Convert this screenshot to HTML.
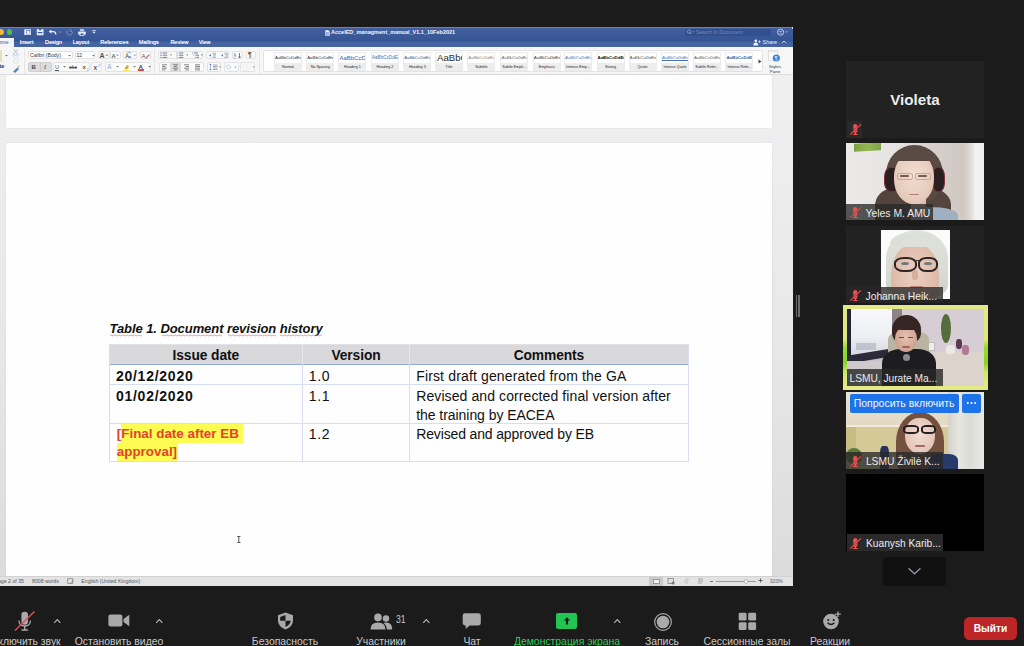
<!DOCTYPE html>
<html><head><meta charset="utf-8">
<style>
*{margin:0;padding:0;box-sizing:border-box}
html,body{width:1024px;height:646px;overflow:hidden;background:#1b1b1b;font-family:"Liberation Sans",sans-serif}
body{position:relative}
.a{position:absolute}
.w{color:#fff}
.tab{position:absolute;top:38.2px;font-size:5.5px;line-height:8px;color:#f4f6fb;text-shadow:0 0 .4px #fff}
.btn{position:absolute;background:#fbfbfb;border:1px solid #e2e2e2;border-radius:2px}
.ico{position:absolute;font-size:6px;line-height:8px;color:#555;text-align:center}
.card{position:absolute;top:52.4px;width:28px;height:18.2px;background:#fdfdfd;border:1px solid #ececec;border-radius:1px}
.card .pv{position:absolute;left:0;right:0;top:0;height:10px;font-size:4.4px;line-height:10px;text-align:center;color:#333;white-space:nowrap;overflow:hidden}
.card .lb{position:absolute;left:0;right:0;bottom:0;height:7px;background:#ededed;font-size:3.7px;line-height:8.6px;text-align:center;color:#222;white-space:nowrap;overflow:hidden}
.page{position:absolute;background:#fefefe;box-shadow:0 0 1px 0 #c4c4c4}
.cell{position:absolute;font-size:14px;line-height:18.2px;color:#111;white-space:nowrap}
.st{position:absolute;top:578px;font-size:5.2px;line-height:7px;color:#555;white-space:nowrap}
.tb{color:#c9c9c9;font-size:10.4px;line-height:14px;white-space:nowrap}
</style></head><body>

<!-- ================= WORD WINDOW ================= -->
<div class="a" style="left:0;top:27px;width:793px;height:559px;background:linear-gradient(180deg,#f1f1f2 0%,#efeff0 12%,#e9e9eb 50%,#dcdbdd 97%)"></div>
<!-- title + tabs -->
<div class="a" style="left:0;top:27px;width:793px;height:20px;background:linear-gradient(180deg,#4460a0 0%,#3c5a9a 35%,#365596 72%,#4663a2 73.5%,#4764a2 100%)"></div>
<div class="a" style="left:0;top:27px;width:793px;height:1px;background:#6a82b8"></div>
<div class="a" style="left:792px;top:27px;width:1px;height:2px;background:#ddd"></div>
<!-- traffic lights -->
<div class="a" style="left:-2px;top:29px;width:6px;height:6px;border-radius:50%;background:#f2b733"></div>
<div class="a" style="left:6.5px;top:29.3px;width:5.6px;height:5.6px;border-radius:50%;background:#50c03e"></div>
<!-- quick access icons -->
<svg class="a" style="left:23px;top:29px" width="76" height="8" viewBox="0 0 76 8">
  <g fill="#e9eef8">
    <path d="M1.3 0.2h6.7v5.9h-6.7z M3.4 1v4.3h3.8v-4.3z" fill-rule="evenodd"/><path d="M3.9 1.4h2l1 1v2.5h-3z" fill="#dfe6f4"/>
    <path d="M13.8 0.6 a.6 .6 0 0 1 .6 -.5h5.5l.6 .6v5a.5 .5 0 0 1 -.5 .5h-5.7a.5 .5 0 0 1 -.5 -.5z M14.8 2.9h4.6v1.3h-4.6z M15.8 .1h2.6v1.2h-2.6z" fill-rule="evenodd"/>
    <path d="M25.8 2.6 L28.3 0.5 L28.3 4.7z"/><path d="M28 2.6 H30.3 Q32.8 2.6 32.8 5.6" fill="none" stroke="#e9eef8" stroke-width="1.4"/>
    <circle cx="37" cy="3.1" r=".7" fill="#aebcdc"/>
    <path d="M56 2.4 h6 a.8 .8 0 0 1 .8 .8 v2.3 h-1.4 v1.3 h-4.8 v-1.3 h-1.4 v-2.3 a.8 .8 0 0 1 .8 -.8z M57 0.2 h4 v1.6 h-4z M57.5 4.4 h3 v1.6 h-3z" fill-rule="evenodd"/>
    <path d="M69.3 1.2 h3.5 v.8 h-3.5z M69.3 2.8 h3.5 l-1.75 1.6z"/>
  </g>
  <path d="M48.3 1.7 A2.6 2.6 0 1 1 45.2 1.4" fill="none" stroke="#7f95c5" stroke-width=".9"/><path d="M46.8 0.2 L48.6 1.4 L46.9 2.8" fill="none" stroke="#7f95c5" stroke-width=".8"/>
</svg>
<!-- doc title -->
<svg class="a" style="left:325px;top:29.5px" width="5" height="6" viewBox="0 0 5 6"><path d="M0.3 0.3h3l1.4 1.4v4h-4.4z" fill="#f2f4fa"/><path d="M1 2.5h2.8M1 3.6h2.8M1 4.7h2.8" stroke="#3e5ea5" stroke-width=".5"/></svg>
<div class="a" style="left:331px;top:28.5px;font-size:5.5px;line-height:7px;font-weight:bold;color:#f2f4fa;white-space:nowrap">AccelED_managment_manual_V1.1_10Feb2021</div>
<!-- search -->
<div class="a" style="left:685px;top:28.5px;width:86px;height:7px;background:#30508f;border-radius:1px"></div>
<svg class="a" style="left:686px;top:29px" width="9" height="6" viewBox="0 0 9 6"><circle cx="3" cy="2.6" r="1.7" fill="none" stroke="#9fb1d6" stroke-width=".7"/><path d="M4.2 3.8 L5.4 5" stroke="#9fb1d6" stroke-width=".8"/><path d="M6.3 2.5h2l-1 1.1z" fill="#9fb1d6"/></svg>
<div class="a" style="left:696px;top:29px;font-size:5.15px;line-height:6px;color:#7388b6;white-space:nowrap">Search in Document</div>
<svg class="a" style="left:776px;top:28px" width="13" height="9" viewBox="0 0 13 9"><circle cx="4.6" cy="4.2" r="3.1" fill="none" stroke="#d9e0ef" stroke-width=".8"/><path d="M3 3.5h3.2M3.3 5.2h2.6" stroke="#d9e0ef" stroke-width=".6"/><path d="M9.5 3.6h2l-1 1.2z" fill="#d9e0ef"/></svg>
<!-- tabs -->
<div class="a" style="left:0;top:38px;width:14px;height:9px;background:#f4f5f7"></div>
<div class="tab" style="left:-6px;color:#3a5da5;text-shadow:none">Home</div>
<div class="tab" style="left:19.7px">Insert</div>
<div class="tab" style="left:45px">Design</div>
<div class="tab" style="left:72.7px">Layout</div>
<div class="tab" style="left:100.3px">References</div>
<div class="tab" style="left:138.7px">Mailings</div>
<div class="tab" style="left:170.4px">Review</div>
<div class="tab" style="left:198.7px">View</div>
<svg class="a" style="left:753px;top:39px" width="8" height="7" viewBox="0 0 8 7"><circle cx="2.8" cy="1.8" r="1.4" fill="#eef1f8"/><path d="M0.3 6.5 Q0.5 3.6 2.8 3.6 Q5 3.6 5.3 6.5z" fill="#eef1f8"/><path d="M5.2 2.6h2.6M6.5 1.3v2.6" stroke="#eef1f8" stroke-width=".7"/></svg>
<div class="a" style="left:762.6px;top:39px;font-size:5.4px;line-height:7px;color:#eef1f8">Share</div>
<svg class="a" style="left:781px;top:40px" width="6" height="4" viewBox="0 0 6 4"><path d="M0.8 3.2 L3 1 L5.2 3.2" fill="none" stroke="#eef1f8" stroke-width=".8"/></svg>

<!-- ribbon -->
<div class="a" style="left:0;top:47px;width:793px;height:28px;background:#f6f6f7"></div>
<div class="a" style="left:0;top:74px;width:793px;height:1px;background:#dedede"></div>
<!-- paste / clipboard -->
<div class="a" style="left:-3px;top:50px;width:5px;height:12px;background:#e9dcc0;border-radius:1px"></div>
<div class="a" style="left:-0.5px;top:63.2px;font-size:5.5px;line-height:7px;color:#333;font-weight:bold">te</div>
<svg class="a" style="left:5px;top:55px" width="3" height="2" viewBox="0 0 3 2"><path d="M0 0h3l-1.5 1.6z" fill="#777"/></svg>
<svg class="a" style="left:11px;top:48px" width="10" height="26" viewBox="0 0 10 26">
  <path d="M2.5 1 L7 6 M7 1 L2.5 6" stroke="#9aa0a8" stroke-width=".6"/><circle cx="3" cy="7.3" r="1.1" fill="none" stroke="#9ab8dc" stroke-width=".5"/><circle cx="6.5" cy="7.3" r="1.1" fill="none" stroke="#9ab8dc" stroke-width=".5"/>
  <circle cx="5" cy="13" r="2.4" fill="none" stroke="#d4d4d4" stroke-width=".6"/>
  <path d="M2.2 23.5 L6.5 19.5 L8 21 L4 25z" fill="#4f7fc4"/><path d="M6 19 L8 17 L9 18 L7.5 20.5z" fill="#d8c9a8"/>
</svg>
<div class="a" style="left:24px;top:49px;width:1px;height:25px;background:#e6e6e6"></div>
<!-- font group -->
<div class="btn" style="left:28px;top:50.7px;width:44.5px;height:8.8px;background:#fff"></div>
<div class="a" style="left:30px;top:51.5px;font-size:5.1px;line-height:7px;color:#333;white-space:nowrap">Calibri (Body)</div>
<svg class="a" style="left:68px;top:54.5px" width="3" height="2" viewBox="0 0 3 2"><path d="M0 0h3l-1.5 1.6z" fill="#777"/></svg>
<div class="btn" style="left:74.7px;top:50.7px;width:20.8px;height:8.8px;background:#fff"></div>
<div class="a" style="left:76.5px;top:51.5px;font-size:5.1px;line-height:7px;color:#333">12</div>
<svg class="a" style="left:91.5px;top:54.5px" width="3" height="2" viewBox="0 0 3 2"><path d="M0 0h3l-1.5 1.6z" fill="#777"/></svg>
<div class="btn" style="left:98px;top:51px;width:12px;height:8px"></div>
<div class="btn" style="left:110px;top:51px;width:10.5px;height:8px"></div>
<svg class="a" style="left:98px;top:51px" width="12" height="8" viewBox="0 0 12 8"><text x="1.6" y="6.6" font-size="7" font-weight="bold" font-family="Liberation Sans" fill="#4a4a4a">A</text><path d="M7.5 4.2h2.6" stroke="#4a7fd0" stroke-width=".9"/></svg>
<svg class="a" style="left:110px;top:51px" width="11" height="8" viewBox="0 0 11 8"><text x="1.5" y="6.6" font-size="5.8" font-weight="bold" font-family="Liberation Sans" fill="#666">A</text><path d="M6.2 3.8h2.6l-1.3 1.2z" fill="#4a7fd0"/></svg>
<div class="btn" style="left:123.4px;top:51px;width:13.6px;height:8px"></div>
<svg class="a" style="left:123.4px;top:51px" width="14" height="8" viewBox="0 0 14 8"><text x="2" y="7" font-size="5.8" font-weight="bold" font-family="Liberation Sans" fill="#666">A</text><text x="5.8" y="7.4" font-size="4" font-weight="bold" font-family="Liberation Sans" fill="#666">a</text><path d="M3.5 2.5 q2 -2 4.5 -.5" stroke="#4a7fd0" stroke-width=".7" fill="none"/><path d="M10.8 3.8h2l-1 1.1z" fill="#666"/></svg>
<div class="btn" style="left:139.7px;top:51px;width:11.5px;height:8px"></div>
<svg class="a" style="left:141px;top:51.5px" width="9" height="7" viewBox="0 0 9 7"><text x="0.5" y="5.5" font-size="6" font-family="Liberation Sans" fill="#555">A</text><path d="M4 6 L7.8 2.2 L8.8 3.2 L5 7z" fill="#e0708a"/></svg>
<!-- row 2 font -->
<div class="btn" style="left:28px;top:62px;width:23.6px;height:9.6px;background:#dcdcdc;border-color:#d0d0d0"></div>
<div class="a" style="left:39.6px;top:62px;width:1px;height:9.6px;background:#c9c9c9"></div>
<div class="a" style="left:31.5px;top:63px;font-size:6px;line-height:8px;font-weight:bold;color:#444">B</div>
<div class="a" style="left:44px;top:63px;font-size:6px;line-height:8px;font-style:italic;font-family:'Liberation Serif';color:#444">I</div>
<div class="btn" style="left:52.7px;top:62px;width:37.6px;height:9.6px"></div>
<div class="a" style="left:55px;top:63px;font-size:5.5px;line-height:8px;text-decoration:underline;color:#555">U</div>
<svg class="a" style="left:63px;top:65.8px" width="3" height="2" viewBox="0 0 3 2"><path d="M0 0h3l-1.5 1.6z" fill="#777"/></svg>
<div class="a" style="left:69px;top:63px;font-size:5px;line-height:8px;color:#555;text-decoration:line-through">abc</div>
<svg class="a" style="left:80.5px;top:62.5px" width="10" height="9" viewBox="0 0 10 9"><text x="1.5" y="5.8" font-size="6" font-weight="bold" font-family="Liberation Sans" fill="#555">x</text><text x="5.8" y="7.8" font-size="3.6" font-family="Liberation Sans" fill="#4a7fd0">2</text></svg>
<div class="btn" style="left:91px;top:62px;width:11.3px;height:9.6px"></div>
<svg class="a" style="left:92px;top:62.5px" width="10" height="9" viewBox="0 0 10 9"><text x="1.5" y="7.3" font-size="6.5" font-weight="bold" font-family="Liberation Sans" fill="#555">x</text><text x="6.3" y="3.6" font-size="3.6" font-family="Liberation Sans" fill="#4a7fd0">2</text></svg>
<div class="btn" style="left:105px;top:62px;width:46.2px;height:9.6px"></div>
<div class="a" style="left:107px;top:62.5px;font-size:6.5px;line-height:8px;color:#a8c0e6;font-weight:bold">A</div>
<svg class="a" style="left:115.5px;top:66px" width="3" height="2" viewBox="0 0 3 2"><path d="M0 0h3l-1.5 1.6z" fill="#777"/></svg>
<svg class="a" style="left:122px;top:62.5px" width="9" height="9" viewBox="0 0 9 9"><path d="M2.5 6 L5 2 L7 3.2 L5 6.5z" fill="#c9a33a"/><rect x="1" y="7" width="6.5" height="1.6" fill="#f6f046"/></svg>
<svg class="a" style="left:133px;top:66px" width="3" height="2" viewBox="0 0 3 2"><path d="M0 0h3l-1.5 1.6z" fill="#777"/></svg>
<svg class="a" style="left:137px;top:62.5px" width="9" height="9" viewBox="0 0 9 9"><text x="1.6" y="5.6" font-size="6.2" font-weight="bold" font-family="Liberation Sans" fill="#444">A</text><rect x="1" y="6.2" width="6" height="1.7" fill="#e02b2b"/></svg>
<svg class="a" style="left:148px;top:66px" width="3" height="2" viewBox="0 0 3 2"><path d="M0 0h3l-1.5 1.6z" fill="#777"/></svg>
<div class="a" style="left:154px;top:49px;width:1px;height:25px;background:#e6e6e6"></div>
<!-- paragraph group -->
<div class="btn" style="left:158.2px;top:51px;width:45.2px;height:8px"></div>
<svg class="a" style="left:159px;top:51.5px" width="45" height="7" viewBox="0 0 45 7">
  <g fill="#4a7fd0"><circle cx="2" cy="1" r=".7"/><circle cx="2" cy="3.2" r=".7"/><circle cx="2" cy="5.4" r=".7"/></g>
  <g stroke="#5a5a5a" stroke-width=".8"><path d="M3.6 1h4.6M3.6 3.2h4.6M3.6 5.4h4.6"/><path d="M19.8 1h4.6M19.8 3.2h4.6M19.8 5.4h4.6"/><path d="M35 1h4M36.5 3.2h3.5M37.5 5.4h2.5"/></g>
  <g stroke="#4a7fd0" stroke-width=".7"><path d="M18 .3v1.4M18 2.5v1.4M18 4.7v1.4"/><path d="M33.5 .4v1.2M34.8 2.6v1.2M36.2 4.8v1.2"/></g>
  <path d="M11 2.6h2l-1 1.2z M27.2 2.6h2l-1 1.2z M41.8 2.6h2l-1 1.2z" fill="#555"/>
  <path d="M10 0v7 M26 0v7" stroke="#e6e6e6" stroke-width=".5"/>
</svg>
<div class="btn" style="left:206px;top:51px;width:22.9px;height:8px"></div>
<svg class="a" style="left:207px;top:51.5px" width="22" height="7" viewBox="0 0 22 7"><path d="M2 3.4 L4 2 v2.8z M14 3.4 L16 2 v2.8z" fill="#4a7fd0"/><path d="M5 1.2h4M6 2.6h3M6 4h3M5 5.4h4M17 1.2h4M18 2.6h3M18 4h3M17 5.4h4" stroke="#777" stroke-width=".5"/></svg>
<div class="btn" style="left:231.5px;top:51px;width:11.1px;height:8px"></div>
<svg class="a" style="left:232.5px;top:51.5px" width="10" height="7" viewBox="0 0 10 7"><text x="0.8" y="3.5" font-size="3.2" fill="#4a7fd0" font-family="Liberation Sans">A</text><text x="0.8" y="6.8" font-size="3.2" fill="#4a7fd0" font-family="Liberation Sans">Z</text><path d="M6.5 1v4.5 M5.5 4.5l1 1.5 1-1.5" stroke="#333" stroke-width=".6" fill="none"/></svg>
<div class="btn" style="left:245.6px;top:51px;width:10.5px;height:8px"></div>
<div class="a" style="left:248px;top:51px;font-size:6.5px;line-height:8px;color:#444;font-weight:bold">¶</div>
<div class="btn" style="left:158.6px;top:62px;width:45.7px;height:9.6px"></div>
<div class="a" style="left:170px;top:62px;width:11.4px;height:9.6px;background:#dcdcdc"></div>
<svg class="a" style="left:159px;top:63px" width="45" height="8" viewBox="0 0 45 8">
  <g stroke="#6a6a6a" stroke-width=".8"><path d="M3 1.8h5M3 3.5h3.5M3 5.2h5M3 6.9h3.5"/><path d="M14 1.8h5M15 3.5h3M14 5.2h5M15 6.9h3"/><path d="M25 1.8h5M26.5 3.5h3.5M25 5.2h5M26.5 6.9h3.5"/><path d="M36 1.8h5M36 3.5h5M36 5.2h5M36 6.9h5"/></g>
</svg>
<div class="btn" style="left:206.9px;top:62px;width:14.6px;height:9.6px"></div>
<svg class="a" style="left:207.5px;top:63px" width="14" height="8" viewBox="0 0 14 8"><path d="M2.5 .5 L1.3 2h2.4z M2.5 7.5 L1.3 6h2.4z" fill="#4a7fd0"/><path d="M2.5 2v4" stroke="#4a7fd0" stroke-width=".5"/><path d="M5 2h4.5M5 3.5h4.5M5 5h4.5M5 6.5h4.5" stroke="#777" stroke-width=".6"/><path d="M11 3.5h2l-1 1.2z" fill="#777"/></svg>
<div class="btn" style="left:223.6px;top:62px;width:15.8px;height:9.6px"></div>
<svg class="a" style="left:224.5px;top:62.5px" width="15" height="8" viewBox="0 0 15 8"><path d="M3 1.5 L6 4 L4 6.5 L1 4z" fill="none" stroke="#9ab8dc" stroke-width=".6"/><path d="M9.5 3.8h2l-1 1.2z" fill="#777"/></svg>
<div class="btn" style="left:240.3px;top:62px;width:14.9px;height:9.6px"></div>
<svg class="a" style="left:241.5px;top:63px" width="14" height="8" viewBox="0 0 14 8"><path d="M1 1h7v6h-7z M4.5 1v6 M1 4h7" stroke="#d8d8d8" stroke-width=".5" stroke-dasharray=".6 .4" fill="none"/><path d="M10.5 3.5h2l-1 1.2z" fill="#777"/></svg>
<div class="a" style="left:259px;top:49px;width:1px;height:25px;background:#e6e6e6"></div>
<!-- styles gallery -->
<div class="a" style="left:263px;top:50.4px;width:500px;height:22px;background:#fff;border:1px solid #e3e3e3;border-radius:2px"></div>
<div class="card" style="left:274px"><div class="pv" style="color:#333">AaBbCcDdEe</div><div class="lb">Normal</div></div>
<div class="card" style="left:306.2px"><div class="pv" style="color:#333">AaBbCcDdEe</div><div class="lb">No Spacing</div></div>
<div class="card" style="left:338.4px"><div class="pv" style="font-size:6px;color:#3e68a8">AaBbCcDc</div><div class="lb">Heading 1</div></div>
<div class="card" style="left:371px"><div class="pv" style="font-size:4.6px;color:#4a74b4">AaBbCcDdEe</div><div class="lb">Heading 2</div></div>
<div class="card" style="left:403.3px"><div class="pv" style="color:#3a5a8a">AaBbCcDdEe</div><div class="lb">Heading 3</div></div>
<div class="card" style="left:435px"><div class="pv" style="font-size:9.6px;color:#2a2a2a;text-align:left;padding-left:1px">AaBbC</div><div class="lb">Title</div></div>
<div class="card" style="left:467.3px"><div class="pv" style="color:#888">AaBbCcDdEe</div><div class="lb">Subtitle</div></div>
<div class="card" style="left:500.4px"><div class="pv" style="color:#666;font-style:italic">AaBbCcDdEe</div><div class="lb">Subtle Emph...</div></div>
<div class="card" style="left:532.8px"><div class="pv" style="color:#333;font-style:italic">AaBbCcDdEe</div><div class="lb">Emphasis</div></div>
<div class="card" style="left:564px"><div class="pv" style="color:#4a74b4;font-style:italic">AaBbCcDdEe</div><div class="lb">Intense Emp...</div></div>
<div class="card" style="left:596.5px"><div class="pv" style="color:#111;font-weight:bold">AaBbCcDdEe</div><div class="lb">Strong</div></div>
<div class="card" style="left:628.5px"><div class="pv" style="color:#555;font-style:italic">AaBbCcDdEe</div><div class="lb">Quote</div></div>
<div class="card" style="left:661px"><div class="pv" style="color:#4a74b4;font-style:italic;text-decoration:underline">AaBbCcDdEe</div><div class="lb">Intense Quote</div></div>
<div class="card" style="left:693px"><div class="pv" style="color:#666">AaBbCcDdEe</div><div class="lb">Subtle Refer...</div></div>
<div class="card" style="left:725.4px"><div class="pv" style="color:#3e68a8;font-weight:bold">AaBbCcDdEe</div><div class="lb">Intense Refe...</div></div>
<svg class="a" style="left:758px;top:58.5px" width="4" height="5" viewBox="0 0 4 5"><path d="M0.5 0.5 L3.5 2.5 L0.5 4.5z" fill="#444"/></svg>
<svg class="a" style="left:767px;top:50px" width="16" height="13" viewBox="0 0 16 13"><rect x="1.5" y="0.5" width="9" height="10" fill="#fdfdfd" stroke="#d0d0d0" stroke-width=".6"/><rect x="1.5" y="0.5" width="9" height="2" fill="#e9e9e9"/><circle cx="9.3" cy="8" r="3.6" fill="#3f86d8"/><text x="7.8" y="10" font-size="5" fill="#fff" font-family="Liberation Sans">¶</text></svg>
<div class="a" style="left:765px;top:63.5px;width:20px;font-size:4.4px;line-height:5px;text-align:center;color:#333">Styles<br>Pane</div>

<!-- document area -->
<div class="page" style="left:6.3px;top:75px;width:765.7px;height:53.2px"></div>
<div class="page" style="left:6.3px;top:143px;width:765.7px;height:433px"></div>
<!-- caption -->
<div class="a" style="left:109.5px;top:320.8px;font-size:13px;line-height:16px;font-weight:bold;font-style:italic;color:#111;white-space:nowrap;letter-spacing:-0.07px">Table 1. Document revision history</div>
<svg class="a" style="left:109px;top:334px" width="216" height="3" viewBox="0 0 216 3">
  <g fill="none" stroke="#e07a7a" stroke-width=".7"><path d="M1 1.5 Q2 .5 3 1.5 T5 1.5 T7 1.5 T9 1.5 T11 1.5 T13 1.5 T15 1.5 T17 1.5 T19 1.5 T21 1.5 T23 1.5 T25 1.5 T27 1.5 T29 1.5 T31 1.5 T33 1.5"/>
  <path d="M53 1.5 Q54 .5 55 1.5 T57 1.5 T59 1.5 T61 1.5 T63 1.5 T65 1.5 T67 1.5 T69 1.5 T71 1.5 T73 1.5 T75 1.5 T77 1.5 T79 1.5 T81 1.5 T83 1.5 T85 1.5 T87 1.5 T89 1.5 T91 1.5 T93 1.5 T95 1.5 T97 1.5 T99 1.5 T101 1.5 T103 1.5 T105 1.5 T107 1.5 T109 1.5 T111 1.5 T113 1.5"/>
  <path d="M119 1.5 Q120 .5 121 1.5 T123 1.5 T125 1.5 T127 1.5 T129 1.5 T131 1.5 T133 1.5 T135 1.5 T137 1.5 T139 1.5 T141 1.5 T143 1.5 T145 1.5 T147 1.5 T149 1.5 T151 1.5 T153 1.5 T155 1.5 T157 1.5 T159 1.5 T161 1.5 T163 1.5 T165 1.5 T167 1.5"/>
  <path d="M171 1.5 Q172 .5 173 1.5 T175 1.5 T177 1.5 T179 1.5 T181 1.5 T183 1.5 T185 1.5 T187 1.5 T189 1.5 T191 1.5 T193 1.5 T195 1.5 T197 1.5 T199 1.5 T201 1.5 T203 1.5 T205 1.5 T207 1.5 T209 1.5 T211 1.5 T213 1.5"/></g>
</svg>
<!-- table -->
<div class="a" style="left:109.3px;top:344.4px;width:579.3px;height:20px;background:#d9d9db"></div>
<div class="a" style="left:109.3px;top:364px;width:579.3px;height:1px;background:#8eaadb"></div>
<div class="a" style="left:109.3px;top:384.3px;width:579.3px;height:1px;background:#d6def0"></div>
<div class="a" style="left:109.3px;top:422.7px;width:579.3px;height:1px;background:#d6def0"></div>
<div class="a" style="left:109.3px;top:461.3px;width:579.3px;height:1px;background:#d6def0"></div>
<div class="a" style="left:109px;top:344.4px;width:1px;height:117px;background:#d6def0"></div>
<div class="a" style="left:302px;top:344.4px;width:1px;height:117px;background:#d6def0"></div>
<div class="a" style="left:409px;top:344.4px;width:1px;height:117px;background:#d6def0"></div>
<div class="a" style="left:688.2px;top:344.4px;width:1px;height:117px;background:#d6def0"></div>
<div class="a" style="left:109.3px;top:344.4px;width:579.3px;height:1px;background:#e3e3e6"></div>
<div class="a" style="left:302px;top:344.4px;width:1px;height:19.6px;background:#e6e6ec"></div>
<div class="a" style="left:409px;top:344.4px;width:1px;height:19.6px;background:#e6e6ec"></div>
<!-- header text -->
<div class="cell" style="left:109.3px;width:193px;top:347.2px;text-align:center;font-weight:bold;font-size:13.8px;letter-spacing:-.1px">Issue date</div>
<div class="cell" style="left:302.5px;width:107px;top:347.2px;text-align:center;font-weight:bold;font-size:13.8px;letter-spacing:-.1px">Version</div>
<div class="cell" style="left:409.4px;width:279px;top:347.2px;text-align:center;font-weight:bold;font-size:13.8px;letter-spacing:-.1px">Comments</div>
<!-- rows -->
<div class="cell" style="left:115.9px;top:366.5px;font-weight:bold;letter-spacing:.75px">20/12/2020</div>
<div class="cell" style="left:115.9px;top:386.7px;font-weight:bold;letter-spacing:.75px">01/02/2020</div>
<div class="cell" style="left:308.8px;top:366.5px;letter-spacing:.6px">1.0</div>
<div class="cell" style="left:308.8px;top:386.7px;letter-spacing:.6px">1.1</div>
<div class="cell" style="left:308.8px;top:424.5px;letter-spacing:.6px">1.2</div>
<div class="cell" style="left:416.2px;top:366.5px;letter-spacing:.15px">First draft generated from the GA</div>
<div class="cell" style="left:416.2px;top:386.7px;letter-spacing:.1px">Revised and corrected final version after</div>
<div class="cell" style="left:416.2px;top:405.5px;letter-spacing:-.05px">the training by EACEA</div>
<div class="cell" style="left:416.2px;top:424.5px;letter-spacing:-.14px">Revised and approved by EB</div>
<!-- highlighted -->
<div class="a" style="left:121px;top:424.1px;width:121.7px;height:18.5px;background:#fdfc52"></div>
<div class="a" style="left:116.5px;top:442.6px;width:61.2px;height:18.4px;background:#fdfc52"></div>
<div class="cell" style="left:116.8px;top:424.6px;font-weight:bold;font-size:13.4px;color:#e5432c">[Final date after EB</div>
<div class="cell" style="left:116.8px;top:442.8px;font-weight:bold;font-size:13.4px;color:#e5432c">approval]</div>
<!-- I-beam -->
<svg class="a" style="left:236px;top:535px" width="6" height="9" viewBox="0 0 6 9"><path d="M1.2 1.5h3.2M1.2 7.5h3.2M2.8 1.5v6" stroke="#444" stroke-width=".9"/></svg>

<!-- status bar -->
<div class="a" style="left:0;top:576px;width:793px;height:10px;background:#e3e3e4"></div>
<div class="a" style="left:0;top:576px;width:793px;height:.6px;background:#d2d2d2"></div>
<div class="st" style="left:-5.5px">Page 2 of 35</div>
<div class="st" style="left:32px">8008 words</div>
<svg class="a" style="left:67px;top:577.5px" width="8" height="7" viewBox="0 0 8 7"><rect x=".8" y=".8" width="5" height="4.5" fill="none" stroke="#666" stroke-width=".6"/><path d="M3.5 5 L7 2.5" stroke="#666" stroke-width=".6"/></svg>
<div class="st" style="left:81.3px">English (United Kingdom)</div>
<div class="a" style="left:649px;top:577px;width:14.4px;height:9px;background:#c9c9c9"></div>
<div class="a" style="left:652.5px;top:579px;width:7px;height:5px;background:#f2f2f2;border:.5px solid #999"></div>
<svg class="a" style="left:666px;top:577px" width="50" height="9" viewBox="0 0 50 9"><rect x="2" y="1.5" width="5.5" height="5" fill="none" stroke="#777" stroke-width=".7"/><circle cx="7" cy="6" r="1.6" fill="#777"/><path d="M19 2h4M18 4h4M19 6h3" stroke="#aaa" stroke-width=".6"/><path d="M32 2h5M32 4h5M32 6h4" stroke="#888" stroke-width=".7"/><path d="M44 4.5h3" stroke="#666" stroke-width=".9"/></svg>
<div class="a" style="left:716px;top:581px;width:40px;height:1px;background:#999"></div>
<div class="a" style="left:744px;top:578.5px;width:4px;height:5px;border-radius:2px;background:#fff;border:.5px solid #bbb"></div>
<svg class="a" style="left:758px;top:578px" width="5" height="5" viewBox="0 0 5 5"><path d="M2.5 .5v4M.5 2.5h4" stroke="#555" stroke-width=".9"/></svg>
<div class="st" style="left:769.7px;color:#666">320%</div>

<!-- ================= ZOOM SIDEBAR ================= -->
<div class="a" style="left:796px;top:295px;width:1.2px;height:22px;background:#6c6c6c"></div>
<div class="a" style="left:798.4px;top:295px;width:1.2px;height:22px;background:#6c6c6c"></div>

<!-- Violeta -->
<div class="a" style="left:846px;top:61px;width:138px;height:77px;background:#222"></div>
<div class="a" style="left:846px;top:90px;width:138px;text-align:center;font-size:15.2px;line-height:20px;font-weight:bold;color:#ececec">Violeta</div>
<div class="a" style="left:846.5px;top:121px;width:15px;height:16.5px;background:#2a2a2a"></div>
<svg class="a mic" style="left:848.5px;top:122.8px" width="13" height="13" viewBox="0 0 13 13"><path d="M4.2 3.2 a2.1 2.3 0 0 1 4.2 0 v2.6 h-4.2z" fill="#ec5252"/><path d="M4.5 5.6 h3.8 v2.4 q0 1.6 -1.2 2.1 v1 h1.6 v.9 h-4.6 v-.9 h1.6 v-1 q-1.2 -.5 -1.2 -2.1z" fill="#ec5252"/><path d="M1.3 11.6 L11.9 1.3" stroke="#262626" stroke-width="1.6" stroke-opacity=".6"/><path d="M1.3 11.6 L11.9 1.3" stroke="#ee5454" stroke-width="1.15"/></svg>

<!-- Yeles -->
<div class="a" style="left:846px;top:143px;width:138px;height:77px;overflow:hidden;background:linear-gradient(90deg,#ebeae9 0%,#e6e4e2 35%,#d8d0cb 62%,#d0c8c3 85%,#ddd9d6 90%,#f2f2f2 94%,#f0f0f0 100%)">
  <div class="a" style="left:7.7px;top:0;width:27px;height:8.4px;background:linear-gradient(90deg,#7aa044,#96b652,#7ea446);transform:skewY(-3deg)"></div>
  <div class="a" style="left:30px;top:42px;width:75px;height:42px;border-radius:45% 45% 20% 20%;background:#54443e"></div>
  <div class="a" style="left:40px;top:1.5px;width:57px;height:58px;border-radius:50% 50% 40% 40%;background:#5a4a44"></div>
  <div class="a" style="left:60px;top:56px;width:20px;height:16px;background:#dcbcaa"></div>
  <div class="a" style="left:42px;top:64px;width:70px;height:20px;border-radius:40% 40% 0 0;background:#9fb0c0"></div>
  <div class="a" style="left:29px;top:46px;width:36px;height:38px;border-radius:45% 20% 0 0;background:#54443e"></div>
  <div class="a" style="left:38px;top:24px;width:16px;height:25px;border-radius:40%;background:#2a2022;border:1.6px solid #7e2a34"></div>
  <div class="a" style="left:86px;top:24px;width:13px;height:25px;border-radius:40%;background:#2a2022;border:1.6px solid #7e2a34"></div>
  <div class="a" style="left:48px;top:10px;width:40px;height:51px;border-radius:46% 46% 48% 48%;background:radial-gradient(ellipse at 50% 42%,#f2ddd0,#e6cbbb 65%,#d2b2a0)"></div>
  <div class="a" style="left:49px;top:8px;width:38px;height:10px;border-radius:50% 50% 0 0;background:#5a4a44"></div>
  <div class="a" style="left:51px;top:30px;width:16px;height:6.5px;border:.8px solid #c8a8a2;border-radius:2px"></div>
  <div class="a" style="left:69px;top:30px;width:16px;height:6.5px;border:.8px solid #c8a8a2;border-radius:2px"></div>
  <div class="a" style="left:54px;top:32px;width:9px;height:2px;background:#7a5a52;border-radius:1px"></div>
  <div class="a" style="left:72px;top:32px;width:9px;height:2px;background:#7a5a52;border-radius:1px"></div>
  <div class="a" style="left:63px;top:50.5px;width:10px;height:1.6px;background:#b0807a;border-radius:1px"></div>
</div>
<div class="a" style="left:846px;top:204px;width:87px;height:16px;background:rgba(40,40,40,.78)"></div>
<svg class="a" style="left:848.5px;top:206.3px" width="13" height="13" viewBox="0 0 13 13"><path d="M4.2 3.2 a2.1 2.3 0 0 1 4.2 0 v2.6 h-4.2z" fill="#ec5252"/><path d="M4.5 5.6 h3.8 v2.4 q0 1.6 -1.2 2.1 v1 h1.6 v.9 h-4.6 v-.9 h1.6 v-1 q-1.2 -.5 -1.2 -2.1z" fill="#ec5252"/><path d="M1.3 11.6 L11.9 1.3" stroke="#262626" stroke-width="1.6" stroke-opacity=".6"/><path d="M1.3 11.6 L11.9 1.3" stroke="#ee5454" stroke-width="1.15"/></svg>
<div class="a" style="left:865.5px;top:206.8px;font-size:10.4px;line-height:14px;color:#ececec;white-space:nowrap">Yeles M. AMU</div>

<!-- Johanna -->
<div class="a" style="left:846px;top:226px;width:138px;height:77px;background:#222"></div>
<div class="a" style="left:880.8px;top:229.8px;width:69.3px;height:69.1px;overflow:hidden;background:#fbfbfb">
  <div class="a" style="left:4.8px;top:0.4px;width:62.4px;height:68px;border-radius:50% 50% 30% 30% / 42% 42% 20% 20%;background:linear-gradient(180deg,#e0e3dd,#d8dcd4 60%,#ccd0c6)"></div>
  <div class="a" style="left:10px;top:14px;width:48px;height:66px;border-radius:46% 46% 40% 40%;background:radial-gradient(ellipse at 50% 45%,#ebcfc1,#deb9a7 70%,#c9a08c)"></div>
  <div class="a" style="left:9px;top:3px;width:50px;height:14px;border-radius:50% 50% 30% 40% / 100% 100% 20% 30%;background:#dde0d9"></div>
  <div class="a" style="left:13.2px;top:27.5px;width:23.5px;height:15px;border:2.3px solid #2e2624;border-radius:42%"></div>
  <div class="a" style="left:37.6px;top:27.5px;width:19.5px;height:15px;border:2.3px solid #2e2624;border-radius:42%"></div>
  <div class="a" style="left:35px;top:30px;width:4px;height:1.6px;background:#3e3432"></div>
  <div class="a" style="left:20px;top:32.5px;width:8px;height:3px;background:#6c7a80;border-radius:50%"></div>
  <div class="a" style="left:43px;top:32.5px;width:8px;height:3px;background:#6c7a80;border-radius:50%"></div>
  <div class="a" style="left:31px;top:40px;width:6px;height:10px;border-radius:40%;background:#d8ae9a"></div>
  <div class="a" style="left:29px;top:56px;width:13px;height:2.2px;background:#c0807a;border-radius:1px"></div>
</div>
<div class="a" style="left:846px;top:287px;width:97px;height:16px;background:rgba(40,40,40,.78)"></div>
<svg class="a" style="left:848.5px;top:289.3px" width="13" height="13" viewBox="0 0 13 13"><path d="M4.2 3.2 a2.1 2.3 0 0 1 4.2 0 v2.6 h-4.2z" fill="#ec5252"/><path d="M4.5 5.6 h3.8 v2.4 q0 1.6 -1.2 2.1 v1 h1.6 v.9 h-4.6 v-.9 h1.6 v-1 q-1.2 -.5 -1.2 -2.1z" fill="#ec5252"/><path d="M1.3 11.6 L11.9 1.3" stroke="#262626" stroke-width="1.6" stroke-opacity=".6"/><path d="M1.3 11.6 L11.9 1.3" stroke="#ee5454" stroke-width="1.15"/></svg>
<div class="a" style="left:865.5px;top:289.6px;font-size:10.3px;line-height:14px;color:#ececec;white-space:nowrap">Johanna Heik...</div>

<!-- Jurate (active speaker) -->
<div class="a" style="left:842.6px;top:304.9px;width:145px;height:84.7px;background:linear-gradient(180deg,#e4e888 0%,#dfe878 40%,#98da30 50%,#86d428 68%,#d6e66a 80%,#e6ea8a 100%)"></div>
<div class="a" style="left:846.6px;top:308.6px;width:137.7px;height:77.6px;overflow:hidden;background:#d6ced4">
  <div class="a" style="left:0;top:0;width:55px;height:78px;background:#c9c3c6"></div>
  <div class="a" style="left:0;top:0;width:5px;height:54px;background:#22253a"></div>
  <div class="a" style="left:4.4px;top:0.4px;width:41px;height:46.5px;background:linear-gradient(180deg,#f8f8fa,#eeeff3 60%,#d8d9e0)"></div>
  <div class="a" style="left:9.5px;top:34.4px;width:20px;height:7px;background:#b4b8c8;opacity:.75"></div>
  <div class="a" style="left:0;top:43px;width:46px;height:8px;background:#2a2a3a;transform:skewY(-9deg)"></div>
  <div class="a" style="left:0;top:52px;width:46px;height:8px;background:#d0cacd"></div>
  <div class="a" style="left:45.4px;top:0;width:9.6px;height:23px;background:#8c8486"></div>
  <div class="a" style="left:87px;top:43px;width:51px;height:35px;background:#dcd4cc"></div>
  <div class="a" style="left:94px;top:5px;width:10px;height:29px;border-radius:50%;background:#556c3c"></div>
  <div class="a" style="left:99px;top:36px;width:9px;height:9px;border-radius:40%;background:#ece8e6"></div>
  <div class="a" style="left:109px;top:30px;width:6px;height:10px;border-radius:40%;background:#5a3a50"></div>
  <div class="a" style="left:115px;top:36px;width:7px;height:10px;border-radius:40%;background:#b07a98"></div>
  <div class="a" style="left:81.3px;top:33px;width:7px;height:9.5px;background:#eee;border:1px solid #bbb"></div>
  <div class="a" style="left:41.7px;top:22px;width:41px;height:24px;border-radius:35% 35% 10% 10%;background:#b9b5a2"></div>
  <div class="a" style="left:35.9px;top:40.3px;width:53.4px;height:40px;border-radius:35% 35% 0 0;background:#1d1d21"></div>
  <div class="a" style="left:56px;top:45px;width:7px;height:7px;border-radius:50%;background:#8a8a8a"></div>
  <div class="a" style="left:45.4px;top:6.6px;width:29.3px;height:29.3px;border-radius:50% 50% 40% 40%;background:#352624"></div>
  <div class="a" style="left:48.3px;top:18.3px;width:22px;height:25.6px;border-radius:45% 45% 50% 50%;background:radial-gradient(ellipse at 50% 40%,#e4c2b4,#cc9e8c 80%)"></div>
  <div class="a" style="left:47px;top:12px;width:26px;height:9px;border-radius:50% 50% 10% 30%;background:#352624"></div>
  <div class="a" style="left:52px;top:28px;width:5.5px;height:1.5px;background:#6a4a44"></div>
  <div class="a" style="left:61px;top:28px;width:5.5px;height:1.5px;background:#6a4a44"></div>
  <div class="a" style="left:55.5px;top:37px;width:8px;height:2px;background:#a8605c;border-radius:1px"></div>
</div>
<div class="a" style="left:846.6px;top:368.6px;width:96px;height:17.6px;background:rgba(40,40,40,.8)"></div>
<div class="a" style="left:849.5px;top:371.6px;font-size:10.2px;line-height:14px;color:#ececec;white-space:nowrap">LSMU, Jurate Ma...</div>

<!-- Zivile -->
<div class="a" style="left:846px;top:391.7px;width:138px;height:77px;overflow:hidden;background:#d5c998">
  <div class="a" style="left:0;top:0;width:138px;height:33px;background:linear-gradient(180deg,#e9e3d6,#e2d9c4)"></div>
  <div class="a" style="left:0;top:33px;width:138px;height:2px;background:#f0eadc"></div>
  <div class="a" style="left:0;top:35px;width:10px;height:42px;background:#c9bb84"></div>
  <div class="a" style="left:102px;top:0;width:36px;height:77px;background:linear-gradient(90deg,#d4d2c8,#e6e6e2 30%,#dcdcd6 60%,#e8e8e6)"></div>
  <div class="a" style="left:0;top:56px;width:16px;height:16px;border-radius:50%;background:#5d7a3a"></div>
  <div class="a" style="left:34px;top:54px;width:9px;height:23px;background:#26305a;border-radius:30% 30% 10% 10%"></div>
  <div class="a" style="left:50px;top:20px;width:48px;height:60px;border-radius:50% 50% 20% 20%;background:#74503e"></div>
  <div class="a" style="left:59px;top:26px;width:30px;height:36px;border-radius:45% 45% 50% 50%;background:radial-gradient(ellipse at 50% 45%,#f2dcd2,#e2c2b4 80%)"></div>
  <div class="a" style="left:57px;top:33px;width:16px;height:9.5px;border:2.2px solid #262020;border-radius:35%"></div>
  <div class="a" style="left:75px;top:33px;width:15px;height:9.5px;border:2.2px solid #262020;border-radius:35%"></div>
  <div class="a" style="left:69px;top:53px;width:10px;height:2px;background:#a46a64;border-radius:1px"></div>
  <div class="a" style="left:82px;top:62px;width:30px;height:20px;border-radius:30% 30% 0 0;background:#273a6a"></div>
</div>
<div class="a" style="left:849.5px;top:393.9px;width:109.6px;height:19px;background:#1f73e8;border-radius:2px"></div>
<div class="a" style="left:853.7px;top:396px;font-size:10.5px;line-height:14px;color:#f2f6ff;white-space:nowrap">Попросить включить</div>
<div class="a" style="left:962.2px;top:393.9px;width:18.8px;height:19px;background:#1f73e8;border-radius:2px"></div>
<svg class="a" style="left:965px;top:400.5px" width="13" height="4" viewBox="0 0 13 4"><circle cx="2.8" cy="2" r="1" fill="#fff"/><circle cx="6.5" cy="2" r="1" fill="#fff"/><circle cx="10.2" cy="2" r="1" fill="#fff"/></svg>
<div class="a" style="left:846px;top:452.4px;width:97px;height:16.4px;background:rgba(40,40,40,.78)"></div>
<svg class="a" style="left:848.5px;top:454.8px" width="13" height="13" viewBox="0 0 13 13"><path d="M4.2 3.2 a2.1 2.3 0 0 1 4.2 0 v2.6 h-4.2z" fill="#ec5252"/><path d="M4.5 5.6 h3.8 v2.4 q0 1.6 -1.2 2.1 v1 h1.6 v.9 h-4.6 v-.9 h1.6 v-1 q-1.2 -.5 -1.2 -2.1z" fill="#ec5252"/><path d="M1.3 11.6 L11.9 1.3" stroke="#262626" stroke-width="1.6" stroke-opacity=".6"/><path d="M1.3 11.6 L11.9 1.3" stroke="#ee5454" stroke-width="1.15"/></svg>
<div class="a" style="left:865.9px;top:455px;font-size:10.3px;line-height:14px;color:#ececec;white-space:nowrap">LSMU Živilė K...</div>

<!-- Kuanysh -->
<div class="a" style="left:846px;top:474px;width:138px;height:77.4px;background:#000"></div>
<div class="a" style="left:846.8px;top:534.4px;width:96px;height:16.7px;background:#2a2a2a"></div>
<svg class="a" style="left:848.5px;top:537.3px" width="13" height="13" viewBox="0 0 13 13"><path d="M4.2 3.2 a2.1 2.3 0 0 1 4.2 0 v2.6 h-4.2z" fill="#ec5252"/><path d="M4.5 5.6 h3.8 v2.4 q0 1.6 -1.2 2.1 v1 h1.6 v.9 h-4.6 v-.9 h1.6 v-1 q-1.2 -.5 -1.2 -2.1z" fill="#ec5252"/><path d="M1.3 11.6 L11.9 1.3" stroke="#262626" stroke-width="1.6" stroke-opacity=".6"/><path d="M1.3 11.6 L11.9 1.3" stroke="#ee5454" stroke-width="1.15"/></svg>
<div class="a" style="left:866px;top:537.3px;font-size:10.2px;line-height:14px;color:#ececec;white-space:nowrap">Kuanysh Karib...</div>

<!-- chevron -->
<div class="a" style="left:883px;top:557.4px;width:63px;height:28.8px;background:#111;border-radius:3.5px"></div>
<svg class="a" style="left:907px;top:567px" width="15" height="9" viewBox="0 0 15 9"><path d="M2 1.8 L7.5 6.8 L13 1.8" fill="none" stroke="#8e8ea2" stroke-width="1.5" stroke-linecap="round"/></svg>

<!-- ================= ZOOM TOOLBAR ================= -->
<svg class="a" style="left:14px;top:610px" width="22" height="22" viewBox="0 0 22 22"><path d="M7.4 5 a3.3 3.3 0 0 1 6.6 0 v6.5 a3.3 3.3 0 0 1 -6.6 0z" fill="#a9a9a9"/><path d="M5 10.5 q0 5.5 5.7 5.5 q5.7 0 5.7 -5.5" fill="none" stroke="#a9a9a9" stroke-width="1.3"/><path d="M10.7 16v3.8M7.5 20h6.4" stroke="#a9a9a9" stroke-width="1.4"/><path d="M1 20.6 L20.5 1.4" stroke="#e0505a" stroke-width="1.4"/></svg>
<svg class="a" style="left:53px;top:618px" width="9" height="6" viewBox="0 0 9 6"><path d="M1.2 4.8 L4.3 1.6 L7.4 4.8" fill="none" stroke="#b8b8b8" stroke-width="1.1"/></svg>
<svg class="a" style="left:108px;top:613px" width="22" height="15" viewBox="0 0 22 15"><rect x=".4" y="1.4" width="14" height="12" rx="2.2" fill="#a9a9a9"/><path d="M15.5 6 L21.3 1.8 v11.4 L15.5 9z" fill="#a9a9a9"/></svg>
<svg class="a" style="left:155px;top:618px" width="9" height="6" viewBox="0 0 9 6"><path d="M1.2 4.8 L4.3 1.6 L7.4 4.8" fill="none" stroke="#b8b8b8" stroke-width="1.1"/></svg>
<svg class="a" style="left:277px;top:612px" width="17" height="18" viewBox="0 0 17 18"><path d="M8.5 .6 L16 3.2 v5.5 q0 5.6 -7.5 8.8 q-7.5 -3.2 -7.5 -8.8 v-5.5z" fill="#a9a9a9"/><path d="M8.5 3 v5.8 h-5.3 v-3.9z M8.5 8.8 h5.3 q-.5 3.7 -5.3 6.3z" fill="#1b1b1b"/></svg>
<svg class="a" style="left:370px;top:613px" width="23" height="17" viewBox="0 0 23 17"><circle cx="8" cy="4.4" r="3.8" fill="#a9a9a9"/><path d="M.5 16.5 q0 -7 7.5 -7 q7.5 0 7.5 7z" fill="#a9a9a9"/><circle cx="16" cy="5.5" r="3.2" fill="#a9a9a9"/><path d="M13.5 10 q1.5 -.6 2.8 -.6 q6 0 6 7.1 h-5.5 q0 -4 -3.3 -6.5z" fill="#a9a9a9"/></svg>
<div class="a" style="left:395.5px;top:611.5px;font-size:11px;line-height:14px;color:#c8c8c8;transform:scaleX(.78);transform-origin:0 0">31</div>
<svg class="a" style="left:422px;top:617.5px" width="9" height="6" viewBox="0 0 9 6"><path d="M1.2 4.8 L4.3 1.6 L7.4 4.8" fill="none" stroke="#b8b8b8" stroke-width="1.1"/></svg>
<svg class="a" style="left:462px;top:612px" width="20" height="18" viewBox="0 0 20 18"><path d="M3 1.3 h13.5 a2.3 2.3 0 0 1 2.3 2.3 v7.5 a2.3 2.3 0 0 1 -2.3 2.3 h-9 l-3.8 3.6 v-3.6 h-.7 a2.3 2.3 0 0 1 -2.3 -2.3 v-7.5 a2.3 2.3 0 0 1 2.3 -2.3z" fill="#a9a9a9"/></svg>
<div class="a" style="left:556.4px;top:613.3px;width:21.1px;height:15.7px;background:#23c552;border-radius:2px"></div>
<svg class="a" style="left:562px;top:616px" width="10" height="10" viewBox="0 0 10 10"><path d="M5 1.2 L8.2 4.6 h-2.1 v4 h-2.2 v-4 h-2.1z" fill="#0d2212"/></svg>
<svg class="a" style="left:613px;top:617.5px" width="9" height="6" viewBox="0 0 9 6"><path d="M1.2 4.8 L4.3 1.6 L7.4 4.8" fill="none" stroke="#b8b8b8" stroke-width="1.1"/></svg>
<svg class="a" style="left:653px;top:611.5px" width="20" height="20" viewBox="0 0 20 20"><circle cx="10" cy="10" r="8.3" fill="none" stroke="#a9a9a9" stroke-width="1.2"/><circle cx="10" cy="10" r="6.3" fill="#a9a9a9"/></svg>
<svg class="a" style="left:737.5px;top:612px" width="19" height="19" viewBox="0 0 19 19"><rect x=".7" y=".7" width="7.9" height="7.9" rx="1.4" fill="#a9a9a9"/><rect x="10.2" y=".7" width="7.9" height="7.9" rx="1.4" fill="#a9a9a9"/><rect x=".7" y="10.2" width="7.9" height="7.9" rx="1.4" fill="#a9a9a9"/><rect x="10.2" y="10.2" width="7.9" height="7.9" rx="1.4" fill="#a9a9a9"/></svg>
<svg class="a" style="left:822px;top:610px" width="22" height="21" viewBox="0 0 22 21"><circle cx="9" cy="11.5" r="7.8" fill="#a9a9a9"/><circle cx="6.3" cy="10" r="1.1" fill="#1b1b1b"/><circle cx="11.7" cy="10" r="1.1" fill="#1b1b1b"/><path d="M5.5 12.8 q3.5 3.4 7 0" fill="none" stroke="#1b1b1b" stroke-width="1.2"/><path d="M16 1.5v5.5M13.2 4.2h5.6" stroke="#a9a9a9" stroke-width="1.3"/></svg>
<div class="a tb" style="left:-9px;top:635px;width:70px;text-align:center">Включить звук</div>
<div class="a tb" style="left:74px;top:635px;width:90px;text-align:center">Остановить видео</div>
<div class="a tb" style="left:245px;top:635px;width:80px;text-align:center">Безопасность</div>
<div class="a tb" style="left:341px;top:635px;width:80px;text-align:center">Участники</div>
<div class="a tb" style="left:442px;top:635px;width:60px;text-align:center">Чат</div>
<div class="a tb" style="left:507px;top:635px;width:120px;text-align:center;color:#2dcf58">Демонстрация экрана</div>
<div class="a tb" style="left:622px;top:635px;width:80px;text-align:center">Запись</div>
<div class="a tb" style="left:697px;top:635px;width:100px;text-align:center">Сессионные залы</div>
<div class="a tb" style="left:790px;top:635px;width:80px;text-align:center">Реакции</div>
<!-- exit -->
<div class="a" style="left:964.1px;top:617.1px;width:52.9px;height:23.3px;background:#bd2527;border-radius:5.5px"></div>
<div class="a" style="left:964.1px;top:621.5px;width:52.9px;text-align:center;font-size:10.2px;line-height:13px;font-weight:bold;color:#fff">Выйти</div>
</body></html>
